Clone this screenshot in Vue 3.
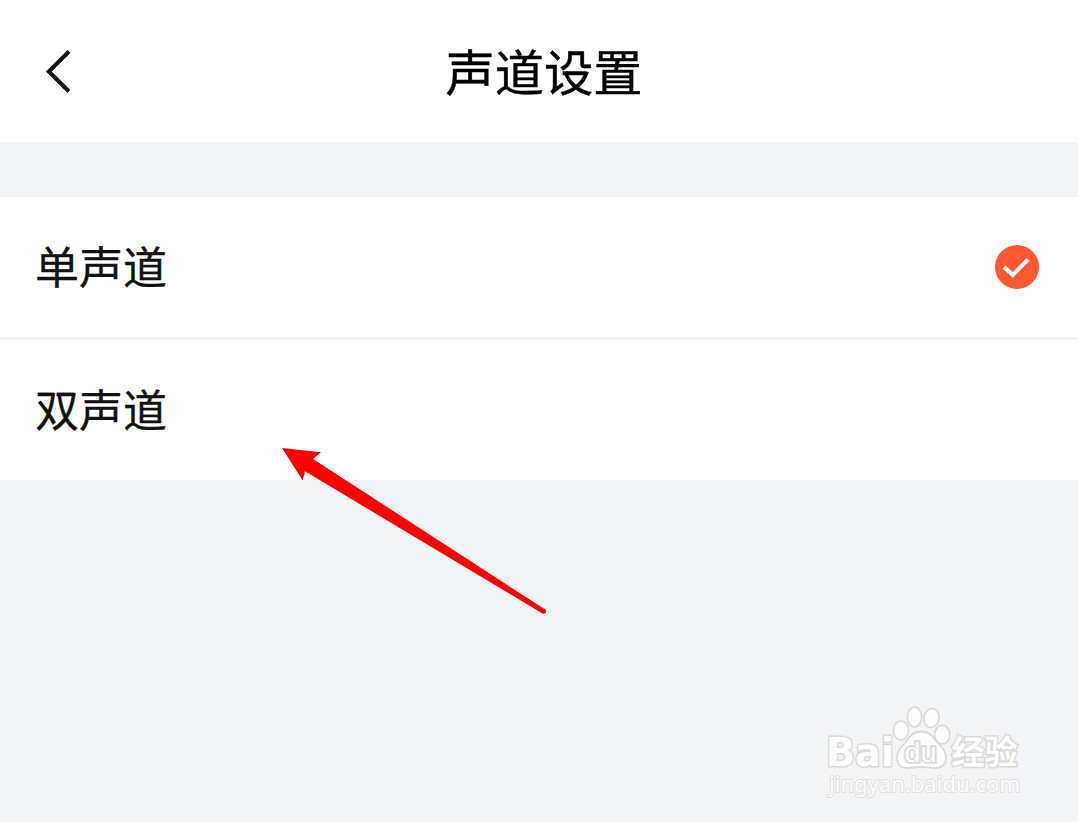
<template>
  <div class="page">
    <header class="header">
      <button class="back" aria-label="返回">
        <svg width="60" height="60" viewBox="0 0 60 60">
          <path d="M39 16.5 18.8 36.5 39 56.5" />
        </svg>
      </button>
      <h1 class="title">声道设置</h1>
    </header>

    <ul class="options">
      <li
        v-for="option in options"
        :key="option.value"
        class="option"
        @click="selected = option.value"
      >
        <span class="label">{{ option.label }}</span>
        <svg v-if="selected === option.value" class="check" viewBox="0 0 44 44">
          <circle cx="22" cy="22" r="22" />
          <path d="M9 22 17.8 30 33 14.5" />
        </svg>
      </li>
    </ul>

    <svg class="arrow" width="270" height="170" viewBox="280 445 270 170">
      <path
        d="M282 448 321 452.3 313 459 545.5 609.7Q547 611.5 545.6 613Q544 614.3 542 613.2L305 471.3 302.7 480.5Z"
      />
    </svg>

    <svg class="watermark" width="210" height="110" viewBox="820 700 210 110">
      <g class="mark">
        <text class="latin" x="826" y="765.5" textLength="68" lengthAdjust="spacingAndGlyphs">Bai</text>
        <ellipse cx="901" cy="730.5" rx="7.5" ry="9.5" />
        <ellipse cx="914.5" cy="717" rx="7.2" ry="9.8" />
        <ellipse cx="931.5" cy="718" rx="7.6" ry="9.5" transform="rotate(10 931.5 718)" />
        <ellipse cx="942.3" cy="734.8" rx="7.6" ry="9.4" />
        <path
          d="M921 731.5C930 731.5 933 737 937 742C941 747 946 750 946 758C946 765 940 769 934 768C929 767.5 926 767 921 767C916 767 912 768 907 768C900 768 896.5 763 897 757C897.5 749 902 747 906 742C910 736 913 731.5 921 731.5Z"
        />
        <text class="du" x="904.5" y="762" textLength="32" lengthAdjust="spacingAndGlyphs">du</text>
        <text class="cjk" x="951.5" y="763.5" textLength="66">经验</text>
      </g>
      <text class="site" x="829" y="791.5" textLength="191">jingyan.baidu.com</text>
    </svg>
  </div>
</template>

<script setup>
import { ref } from 'vue';

const options = [
  { value: 'mono', label: '单声道' },
  { value: 'stereo', label: '双声道' },
];

const selected = ref('mono');
</script>

<style>
body {
  margin: 0;
  background: #f2f4f6;
}
</style>

<style scoped>
.page {
  position: relative;
  height: 822px;
  overflow: hidden;
  background: #f2f4f6;
  font-family: 'Noto Sans CJK SC', sans-serif;
}

.header {
  display: grid;
  grid-template-columns: 100px 1fr 90px;
  align-items: center;
  height: 142px;
  background: #fff;
}

.back {
  display: flex;
  width: 60px;
  height: 60px;
  margin: 0 0 12px 30px;
  padding: 0;
  border: 0;
  background: none;
}

.back path {
  fill: none;
  stroke: #111;
  stroke-width: 4;
}

.title {
  margin: 0;
  padding-bottom: 3px;
  color: #000;
  font-size: 49.3px;
  font-weight: 400;
  line-height: 72px;
  text-align: center;
  -webkit-text-stroke: 0.4px #000;
}

.options {
  margin: 55px 0 0;
  padding: 0;
  list-style: none;
}

.option {
  display: flex;
  align-items: center;
  justify-content: space-between;
  height: 140px;
  padding: 0 39px 0 35px;
  background: #fff;
}

.option + .option {
  border-top: 3px solid #f2f3f5;
}

.label {
  padding-bottom: 4px;
  color: #111;
  font-size: 44px;
  line-height: 64px;
  -webkit-text-stroke: 0.3px #111;
}

.check {
  width: 44px;
  height: 44px;
}

.check circle {
  fill: #ff5934;
}

.check path {
  fill: none;
  stroke: #fff;
  stroke-width: 4;
}

.arrow {
  position: absolute;
  top: 445px;
  left: 280px;
  fill: #f00;
}

.watermark {
  position: absolute;
  top: 700px;
  left: 820px;
}

.mark {
  fill: #fcfdfd;
  stroke: #d9dadb;
  stroke-width: 1.8;
}

.mark text {
  paint-order: stroke;
  stroke-width: 3;
}

.latin {
  font: 700 39px 'DejaVu Sans', sans-serif;
}

.mark .du {
  stroke-width: 3.6;
  font: 400 27px 'Liberation Sans', sans-serif;
}

.cjk {
  font: 700 33px 'Noto Sans CJK SC', sans-serif;
}

.site {
  fill: #fcfdfd;
  stroke: #dfe0e1;
  stroke-width: 2;
  paint-order: stroke;
  font: 400 22px 'Noto Sans', sans-serif;
}
</style>
